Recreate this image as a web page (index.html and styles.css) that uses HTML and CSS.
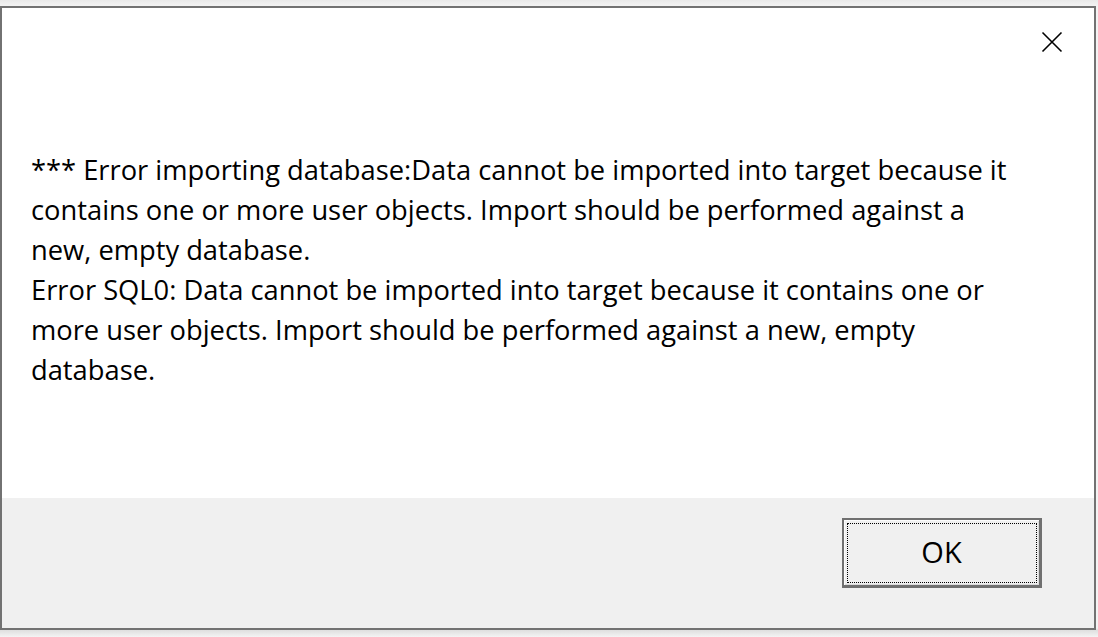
FILE: index.html
```html
<!DOCTYPE html>
<html lang="en">
<head>
<meta charset="utf-8">
<title>Error</title>
<link rel="stylesheet" href="styles.css">
</head>
<body>
<div class="window">
  <div class="titlebar">
    <button class="close" aria-label="Close">
      <svg width="22" height="22" viewBox="0 0 22 22"><path d="M1.5 1.5 L20.5 20.5 M20.5 1.5 L1.5 20.5" stroke="#000" stroke-width="1.6" fill="none"/></svg>
    </button>
  </div>
  <div class="body">
    <p class="message">*** Error importing database:Data cannot be imported into target because it<br>contains one or more user objects. Import should be performed against a<br>new, empty database.<br>Error SQL0: Data cannot be imported into target because it contains one or<br>more user objects. Import should be performed against a new, empty<br>database.</p>
  </div>
  <div class="footer">
    <button class="ok">OK</button>
  </div>
</div>
</body>
</html>
```
FILE: styles.css
```css
html, body {
  margin: 0;
  padding: 0;
}
body {
  width: 1098px;
  height: 637px;
  overflow: hidden;
  background: linear-gradient(to bottom, #e9e9e9 0px, #f3f3f3 6px, #f3f3f3 628px, #dedede 630px, #f4f4f4 637px);
  font-family: "Open Sans", "Noto Sans", sans-serif;
}
.window {
  box-sizing: border-box;
  width: 1096px;
  height: 624px;
  margin-top: 6px;
  border: 2px solid #727272;
  background: #ffffff;
  display: flex;
  flex-direction: column;
}
.titlebar {
  height: 68px;
  display: flex;
  justify-content: flex-end;
  flex: none;
}
.close {
  width: 84px;
  height: 68px;
  border: 0;
  padding: 0;
  background: transparent;
  display: flex;
  align-items: center;
  justify-content: center;
}
.body {
  flex: 1;
  padding: 74px 0 0 29px;
}
.message {
  margin: 0;
  font-size: 27.3px;
  line-height: 40px;
  color: #000;
  white-space: nowrap;
}
.footer {
  flex: none;
  height: 130px;
  box-sizing: border-box;
  background: #f0f0f0;
  display: flex;
  justify-content: flex-end;
  align-items: flex-start;
  padding: 20px 52px 0 0;
}
.ok {
  box-sizing: border-box;
  width: 200px;
  height: 70px;
  border: 2px solid #707070;
  border-right-width: 3px;
  border-bottom-width: 3px;
  background: #f0f0f0;
  box-shadow: inset 1px 1px 0 #fcfcfc, inset -1px -1px 0 #dcdcdc;
  outline: 1px dotted #000;
  outline-offset: -6px;
  font-family: "Open Sans", "Noto Sans", sans-serif;
  font-size: 29px;
  color: #000;
  padding: 0 0 2px 0;
}
```
